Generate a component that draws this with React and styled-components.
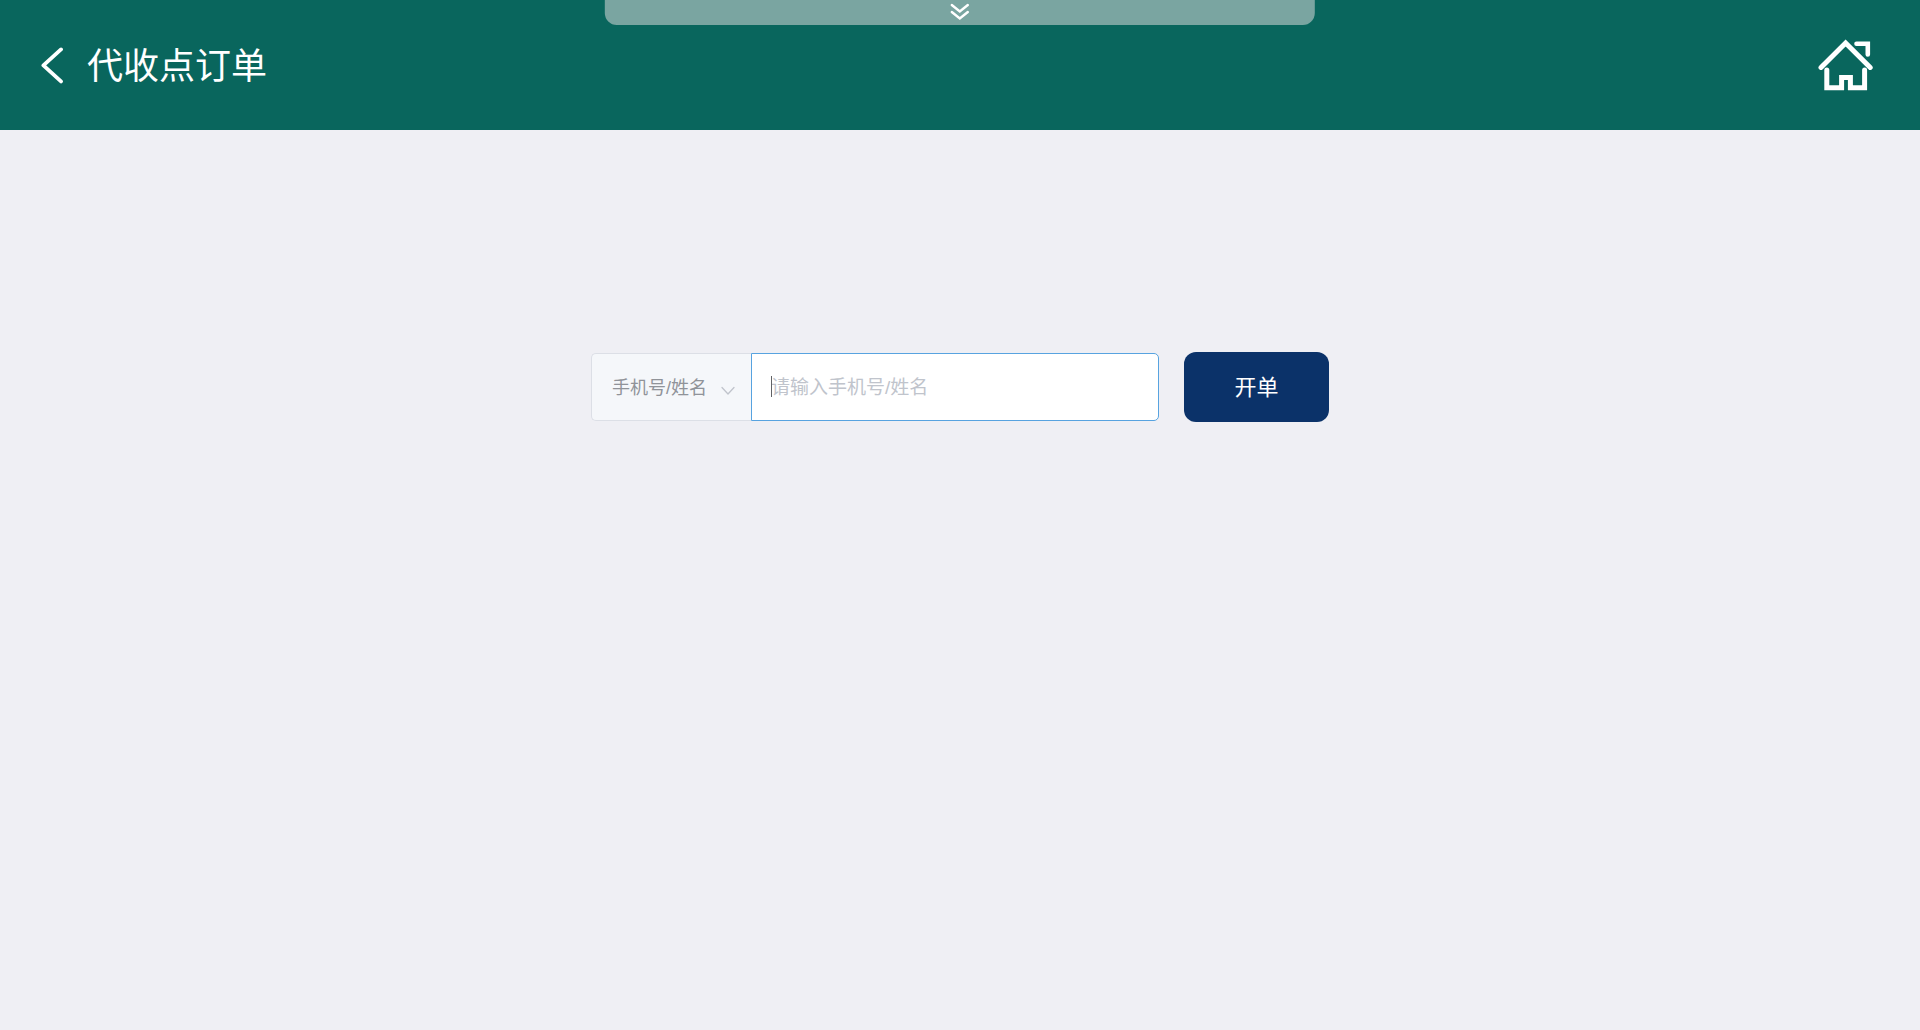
import React from 'react';
import styled, { createGlobalStyle } from 'styled-components';

const GlobalStyle = createGlobalStyle`
  * {
    box-sizing: border-box;
  }

  body {
    margin: 0;
    background-color: #efeff4;
    font-family: 'Liberation Sans', 'Noto Sans CJK SC', sans-serif;
  }

  button,
  input,
  select {
    font-family: inherit;
  }
`;

const Header = styled.header`
  position: relative;
  display: flex;
  align-items: center;
  justify-content: space-between;
  height: 130px;
  padding: 0 46px 0 40px;
  background-color: #09665d;
  color: #fff;
`;

const IconButton = styled.button`
  display: flex;
  padding: 0;
  border: none;
  background: none;
  color: inherit;
  cursor: pointer;
`;

const HeaderLeft = styled.div`
  display: flex;
  align-items: center;
  gap: 23px;
`;

const Title = styled.h1`
  margin: 0;
  padding-top: 3px;
  font-size: 36px;
  font-weight: 400;
  line-height: 48px;
`;

// hangs over the top edge of the header
const PullTab = styled.button`
  position: absolute;
  top: 0;
  left: 50%;
  display: flex;
  align-items: center;
  justify-content: center;
  width: 37%;
  height: 25px;
  margin: 0;
  padding: 0 0 2px;
  transform: translateX(-50%);
  border: none;
  border-radius: 0 0 12px 12px;
  background-color: #7aa5a1;
  color: #fff;
  cursor: pointer;
`;

const Main = styled.main`
  padding: 222px 20px 0;
`;

const SearchForm = styled.form`
  display: flex;
  align-items: center;
  justify-content: center;
  gap: 25px;
`;

const InputGroup = styled.div`
  display: flex;
  width: 568px;
  height: 68px;
`;

const SelectBox = styled.div`
  position: relative;
  flex: 0 0 160px;

  svg {
    position: absolute;
    top: 33px;
    right: 16px;
    pointer-events: none;
  }
`;

const Select = styled.select`
  width: 100%;
  height: 100%;
  padding: 2px 32px 0 20px;
  appearance: none;
  border: 1px solid #dcdfe6;
  border-right: none;
  border-radius: 5px 0 0 5px;
  outline: none;
  background-color: #f5f7fa;
  color: #909399;
  font-size: 18px;
`;

const InputBox = styled.div`
  position: relative;
  display: flex;
  flex: 1;
  min-width: 0;
`;

const Input = styled.input`
  width: 100%;
  padding: 2px 19px 0;
  border: 1px solid #dcdfe6;
  border-radius: 0 5px 5px 0;
  outline: none;
  background-color: #fff;
  caret-color: transparent;
  color: #606266;
  font-size: 19px;

  &::placeholder {
    color: #c0c4cc;
    opacity: 1;
  }

  &:focus {
    border-color: #57a3e0;
  }
`;

const Caret = styled.span`
  position: absolute;
  top: 23px;
  left: 20px;
  width: 1px;
  height: 21px;
  background-color: #606266;
  pointer-events: none;
`;

const SubmitButton = styled.button`
  width: 145px;
  height: 70px;
  padding: 0 0 4px;
  border: none;
  border-radius: 12px;
  background-color: #0b3269;
  color: #fff;
  font-size: 22px;
  cursor: pointer;
`;

const strokeProps = {
  fill: 'none',
  stroke: 'currentColor',
  strokeLinecap: 'round',
  'aria-hidden': true
};

const BackIcon = () => (
  <svg width="24" height="38" viewBox="0 0 24 38" strokeWidth="3.8" {...strokeProps}>
    <path d="M21 3.4 L3.4 19.4 L21 35.4" strokeLinejoin="round" />
  </svg>
);

const HomeIcon = () => (
  <svg width="56" height="54" viewBox="0 0 56 54" strokeWidth="5" {...strokeProps}>
    <path d="M3 29.4 L27.6 5 L52.2 29.4" />
    <path d="M38.5 5.7 H49.8 V16.5" strokeWidth="4.6" />
    <path d="M8.8 32 V49.8 H23.6 V39.6 H32.4 V49.8 H46.6 V32" />
  </svg>
);

const DoubleDownIcon = () => (
  <svg width="20" height="18" viewBox="0 0 20 18" strokeWidth="2.4" {...strokeProps}>
    <path d="M2 2 L10 8.5 L18 2" />
    <path d="M2 9 L10 15.5 L18 9" />
  </svg>
);

const ArrowDownIcon = () => (
  <svg width="14" height="10" viewBox="0 0 14 10" strokeWidth="1.3" {...strokeProps}>
    <path d="M1 1.5 L7 8 L13 1.5" stroke="#c0c4cc" strokeLinejoin="round" />
  </svg>
);

const App = () => {
  const [value, setValue] = React.useState('');

  return (
    <>
      <GlobalStyle />
      <Header>
        <HeaderLeft>
          <IconButton type="button" aria-label="返回">
            <BackIcon />
          </IconButton>
          <Title>代收点订单</Title>
        </HeaderLeft>
        <PullTab type="button" aria-label="展开">
          <DoubleDownIcon />
        </PullTab>
        <IconButton type="button" aria-label="首页">
          <HomeIcon />
        </IconButton>
      </Header>

      <Main>
        <SearchForm onSubmit={e => e.preventDefault()}>
          <InputGroup>
            <SelectBox>
              <Select aria-label="查询方式">
                <option>手机号/姓名</option>
              </Select>
              <ArrowDownIcon />
            </SelectBox>
            <InputBox>
              <Input
                type="text"
                aria-label="手机号/姓名"
                placeholder="请输入手机号/姓名"
                value={value}
                onChange={e => setValue(e.target.value)}
                style={value ? { caretColor: '#606266' } : undefined}
                autoFocus
              />
              {!value && <Caret />}
            </InputBox>
          </InputGroup>
          <SubmitButton type="submit">开单</SubmitButton>
        </SearchForm>
      </Main>
    </>
  );
};

export default App;
